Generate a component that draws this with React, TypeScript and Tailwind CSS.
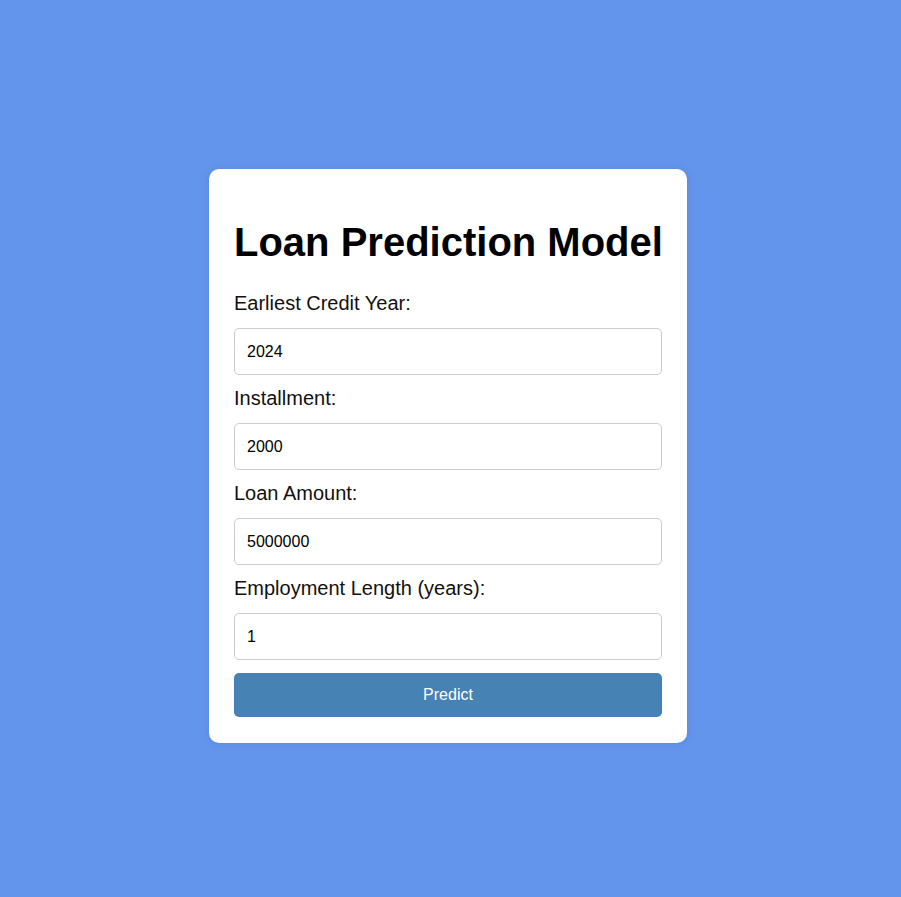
const fields = [
  { label: "Earliest Credit Year:", value: "2024" },
  { label: "Installment:", value: "2000" },
  { label: "Loan Amount:", value: "5000000" },
  { label: "Employment Length (years):", value: "1" },
];

export default function App() {
  return (
    <div className="min-h-screen bg-[#6495ED] flex items-center justify-center pt-[15px] pr-[5px] font-['Liberation_Sans',Arial,sans-serif]">
      <div className="w-[478px] bg-white rounded-[10px] px-[25px] pt-[25px] pb-[26px] shadow-[0_0_10px_rgba(0,0,0,0.1)]">
        <h1 className="mt-[25px] mb-[27px] text-[40px] font-bold text-black leading-[46px] whitespace-nowrap">
          Loan Prediction Model
        </h1>
        <form onSubmit={(e) => e.preventDefault()}>
          {fields.map((field, index) => (
            <div key={index}>
              <label className="block text-[20px] leading-[23px] mb-[13px] text-[#111]">
                {field.label}
              </label>
              <input
                type="text"
                defaultValue={field.value}
                className={`block w-full h-[47px] px-[12px] text-[16px] text-black border border-[#ccc] rounded-[5px] outline-none ${index === fields.length - 1 ? "mb-[13px]" : "mb-[12px]"}`}
              />
            </div>
          ))}
          <button
            type="submit"
            className="block w-full h-[44px] bg-[#4682B4] text-white text-[16px] rounded-[5px]"
          >
            Predict
          </button>
        </form>
      </div>
    </div>
  );
}
